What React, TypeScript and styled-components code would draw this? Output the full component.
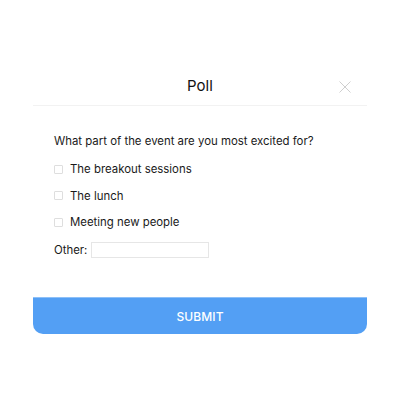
import React from "react";
import styled, { createGlobalStyle } from "styled-components";

const Global = createGlobalStyle`
  html, body { margin: 0; padding: 0; background: #fff; }
  body { font-family: Inter, "Noto Sans", sans-serif; color: #1a1a1a; }
`;

const Card = styled.div`
  width: 334px;
  margin: 66px 0 0 33px;
  background: #fff;
  border-radius: 10px;
  display: flex;
  flex-direction: column;
`;

const Header = styled.div`
  position: relative;
  height: 39px;
  display: flex;
  align-items: center;
  justify-content: center;
  border-bottom: 1px solid #f2f2f2;
`;

const Title = styled.h2`
  margin: 0;
  font-size: 15px;
  font-weight: 400;
  color: #111;
`;

const Close = styled.button`
  position: absolute;
  right: 16px;
  top: 15px;
  width: 12px;
  height: 12px;
  padding: 0;
  border: 0;
  background: none;
  display: flex;
`;

const Body = styled.div`
  padding: 25px 21px 0;
  display: flex;
  flex-direction: column;
`;

const Question = styled.div`
  font-size: 11.4px;
  line-height: 20px;
  margin-bottom: 9px;
`;

const Option = styled.label`
  display: flex;
  align-items: center;
  gap: 7px;
  height: 18px;
  font-size: 11.4px;
  & + & { margin-top: 8.5px; }
`;

const Box = styled.span`
  width: 7px;
  height: 7px;
  border: 1px solid #dedede;
  border-radius: 1px;
`;

const OtherRow = styled.div`
  display: flex;
  align-items: center;
  gap: 4px;
  height: 18px;
  margin-top: 10px;
  font-size: 11.4px;
`;

const Input = styled.div`
  width: 116px;
  height: 14px;
  border: 1px solid #e6e6e6;
`;

const Submit = styled.button`
  margin-top: 38px;
  height: 37px;
  border: 0;
  border-top: 1px solid #8dc0f8;
  border-radius: 0 0 10px 10px;
  background: #539ff4;
  color: #fff;
  font-family: Inter, sans-serif;
  font-size: 12px;
  font-weight: 500;
  letter-spacing: 0.1px;
`;

export default function App() {
  return (
    <>
      <Global />
      <Card>
        <Header>
          <Title>Poll</Title>
          <Close aria-label="close">
            <svg width="12" height="12" viewBox="0 0 12 12">
              <path d="M0.5 0.5 L11.5 11.5 M11.5 0.5 L0.5 11.5" stroke="#cfcfcf" strokeWidth="1" />
            </svg>
          </Close>
        </Header>
        <Body>
          <Question>What part of the event are you most excited for?</Question>
          {["The breakout sessions", "The lunch", "Meeting new people"].map((t) => (
            <Option key={t}>
              <Box />
              {t}
            </Option>
          ))}
          <OtherRow>
            Other:
            <Input />
          </OtherRow>
        </Body>
        <Submit>SUBMIT</Submit>
      </Card>
    </>
  );
}
